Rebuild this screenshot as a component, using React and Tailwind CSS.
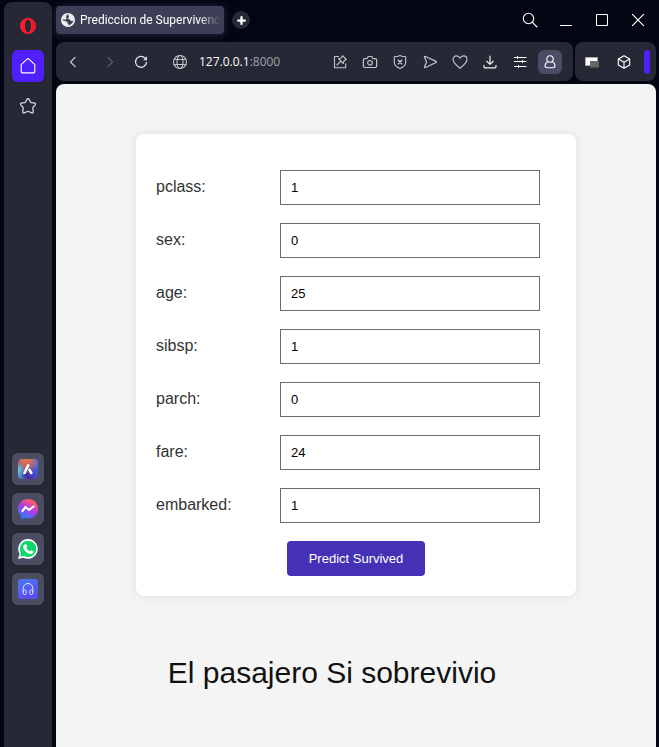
import React from "react";

const FIELDS = [
  { name: "pclass", value: "1" },
  { name: "sex", value: "0" },
  { name: "age", value: "25" },
  { name: "sibsp", value: "1" },
  { name: "parch", value: "0" },
  { name: "fare", value: "24" },
  { name: "embarked", value: "1" },
];

function Icon({ children, className = "size-4", width = 1.1 }) {
  return (
    <svg
      viewBox="0 0 16 16"
      className={className}
      fill="none"
      stroke="currentColor"
      strokeWidth={width}
      strokeLinecap="round"
      strokeLinejoin="round"
      aria-hidden="true"
    >
      {children}
    </svg>
  );
}

function IconButton({ label, className = "w-[30px] h-6", children }) {
  return (
    <button type="button" aria-label={label} className={`flex shrink-0 items-center justify-center ${className}`}>
      {children}
    </button>
  );
}

function Sidebar() {
  return (
    <nav className="ml-1 mt-0.5 flex w-12 shrink-0 flex-col items-center rounded-t-lg bg-[#262935] pt-2 text-[#d4d5dc]">
      <IconButton label="Opera" className="size-8">
        <svg viewBox="0 0 16 16" className="size-4" aria-hidden="true">
          <path
            fill="#ff1b2d"
            fillRule="evenodd"
            d="M8 0a8 8 0 1 0 0 16A8 8 0 0 0 8 0ZM8 1.800c1.900 0 3 2.800 3 6.200s-1.100 6.200-3 6.200S5 11.400 5 8s1.100-6.200 3-6.200Z"
          />
          <path fill="#e0192a" d="M10.500 1c3.200 1 5.500 3.800 5.500 7s-2.300 6-5.500 7c1.300-1.400 2-4 2-7s-.7-5.600-2-7Z" />
        </svg>
      </IconButton>
      <IconButton label="Home" className="mt-2 size-8 rounded-md bg-[#4f1fff] text-white">
        <Icon>
          <path d="M1.200 6.700 6.800 1.300a1.700 1.700 0 0 1 2.400 0l5.600 5.400v6.200a2 2 0 0 1-2 2H3.200a2 2 0 0 1-2-2Z" />
        </Icon>
      </IconButton>
      <IconButton label="Bookmarks" className="mt-2 size-8">
        <Icon width={1.3}>
          <path d="M7.100 1.100c.4-.7 1.400-.7 1.800 0l1.700 3.100c.1.200.4.400.7.400l3.400.6c.8.200 1.100 1.100.6 1.700l-2.200 2.400c-.2.300-.3.600-.3.900l.5 3.600c.1.800-.7 1.400-1.400 1.100l-3.400-1.400a1.300 1.300 0 0 0-1 0l-3.400 1.400c-.7.300-1.500-.3-1.400-1.100l.5-3.600c0-.3-.1-.6-.3-.9L.7 6.900c-.5-.6-.2-1.500.6-1.700l3.400-.6c.3 0 .6-.2.700-.4Z" />
        </Icon>
      </IconButton>

      <div className="mt-[331px] flex flex-col gap-2">
        <IconButton label="Aria" className="size-8 rounded-md bg-[#4b4d63]">
          <svg viewBox="0 0 20 20" className="size-5" aria-hidden="true">
            <defs>
              <linearGradient id="aria" x1="0" y1="1" x2="1" y2="0.3">
                <stop offset="0" stopColor="#3fb0e6" />
                <stop offset="0.35" stopColor="#4a2b9c" />
                <stop offset="1" stopColor="#3f69ee" />
              </linearGradient>
              <radialGradient id="ariaWarm" cx="0.4" cy="0.05" r="0.7">
                <stop offset="0" stopColor="#e8744a" />
                <stop offset="0.4" stopColor="#e8744a" stopOpacity="0.8" />
                <stop offset="1" stopColor="#e8744a" stopOpacity="0" />
              </radialGradient>
              <radialGradient id="ariaCool" cx="0" cy="0.55" r="0.4">
                <stop offset="0" stopColor="#69d8ea" />
                <stop offset="1" stopColor="#69d8ea" stopOpacity="0" />
              </radialGradient>
            </defs>
            <rect width="20" height="20" rx="4" fill="url(#aria)" />
            <rect width="20" height="20" rx="4" fill="url(#ariaWarm)" />
            <rect width="20" height="20" rx="4" fill="url(#ariaCool)" />
            <path d="M6.500 14 10.200 6.300M11.500 10.800 13.300 14" fill="none" stroke="#fff" strokeWidth="2.600" strokeLinecap="round" />
          </svg>
        </IconButton>
        <IconButton label="Messenger" className="size-8 rounded-md bg-[#4b4d63]">
          <svg viewBox="0 0 20 20" className="size-5" aria-hidden="true">
            <defs>
              <linearGradient id="messenger" x1="0.2" y1="1" x2="0.75" y2="0">
                <stop offset="0" stopColor="#1689ff" />
                <stop offset="0.5" stopColor="#a83de8" />
                <stop offset="0.9" stopColor="#ff5a70" />
              </linearGradient>
            </defs>
            <path fill="url(#messenger)" d="M10 0C4.300 0 0 4.200 0 9.700c0 2.900 1.200 5.300 3.200 7.100v2.600c0 .5.500.8.9.6l2.300-1c1.100.3 2.300.5 3.600.5 5.700 0 10-4.200 10-9.800S15.700 0 10 0Z" />
            <path d="m4.500 12 3-4 3.500 3 4.500-3.500" fill="none" stroke="#fff" strokeWidth="2.200" strokeLinejoin="round" strokeLinecap="round" />
          </svg>
        </IconButton>
        <IconButton label="WhatsApp" className="size-8 rounded-md bg-[#4b4d63]">
          <svg viewBox="0 0 20 20" className="size-5" aria-hidden="true">
            <path fill="#fff" d="M10.100 0a9.900 9.900 0 0 0-8.500 14.900L0 20l5.300-1.300A9.900 9.900 0 1 0 10.100 0Z" />
            <circle cx="10.100" cy="9.900" r="8.200" fill="#0bd86b" />
            <path fill="#0bd86b" d="m3 12.500-.8 5.300 5-1.300Z" />
            <path fill="#fff" d="M6.900 5.200h.9c.3 0 .4.200.6.500l.8 1.900c.1.300 0 .5-.9 1.500.9 1.700 2 2.600 3.600 3.300.8-1 1-1.200 1.300-1l2 .9c.3.200.3.400.2 1-.2 1.100-1.500 1.900-2.600 1.800-4-.5-7.400-3.700-7.700-7 0-1.300.9-2.600 1.800-2.900Z" />
          </svg>
        </IconButton>
        <IconButton label="Player" className="size-8 rounded-md bg-[#4b4d63]">
          <svg viewBox="0 0 20 20" className="size-5" aria-hidden="true">
            <defs>
              <linearGradient id="player" x1="0" y1="0" x2="0.4" y2="1">
                <stop offset="0" stopColor="#477bf0" />
                <stop offset="1" stopColor="#5a4cf0" />
              </linearGradient>
            </defs>
            <rect width="20" height="20" rx="3" fill="url(#player)" />
            <path
              d="M5.200 13V9.300a4.800 4.800 0 0 1 9.600 0V13M5.200 12.500c0-2 3-2.200 3-.2v1.900c0 2-3 1.800-3-.2Zm9.600 0c0-2-3-2.200-3-.2v1.900c0 2 3 1.800 3-.2Z"
              fill="none"
              stroke="#e4e6ff"
              strokeWidth="1"
            />
          </svg>
        </IconButton>
      </div>
    </nav>
  );
}

function TitleBar() {
  return (
    <header className="flex h-10 items-center text-white">
      <div className="flex h-7 w-[168px] items-center gap-[5px] rounded bg-[#3c3f56] pl-[5px] pr-1 shadow-[0_1px_8px_rgba(60,63,86,0.6)]">
        <svg viewBox="0 0 14 14" className="size-3.5 shrink-0" aria-hidden="true">
          <circle cx="7" cy="7" r="7" fill="#eceef3" />
          <path
            fill="#3c3f56"
            d="M8.500 1.500C7.300 1.900 7 2.400 7.200 3.100c1 .1 1.200.8.700 1.400-.9.400-1.700.5-1.500 1.300 1.600 0 2.900.6 3 1.900l2.800.3c-.3 1.500-1.200 2.700-2.700 3.500l-2 .9V10.700c-.8-.4-1.300-1-1.300-2L1.700 7.300c-.1-.4-.1-.7 0-1.100l2.800.5c.9-.1.400-1.700 1-2.400-.6-.6-.4-1.700.5-2.600.8-.3 1.700-.4 2.500-.2Z"
          />
        </svg>
        <span className="whitespace-nowrap font-[Roboto,sans-serif] text-xs [mask-image:linear-gradient(to_right,black_85%,transparent)]">
          Prediccion de Supervivenc
        </span>
      </div>
      <IconButton label="New tab" className="ml-2 size-[18px] rounded-full bg-[#262935]">
        <Icon width={4} className="size-[9px]">
          <path d="M8 2v12M2 8h12" />
        </Icon>
      </IconButton>
      <div className="ml-auto flex">
        <IconButton label="Search tabs" className="h-8 w-9">
          <Icon>
            <circle cx="6.500" cy="6.500" r="5.200" />
            <path d="m10.400 10.400 4.600 4.600" />
          </Icon>
        </IconButton>
        <IconButton label="Minimize" className="h-8 w-9">
          <svg viewBox="0 0 12 12" className="size-3" aria-hidden="true"><path d="M0 11h12v1H0z" fill="currentColor" /></svg>
        </IconButton>
        <IconButton label="Maximize" className="h-8 w-9">
          <svg viewBox="0 0 12 12" className="size-3" aria-hidden="true"><path d="M.5.5h11v11H.5z" fill="none" stroke="currentColor" /></svg>
        </IconButton>
        <IconButton label="Close" className="h-8 w-9">
          <svg viewBox="0 0 12 12" className="size-3" aria-hidden="true"><path d="m0 0 12 12M12 0 0 12" fill="none" stroke="currentColor" strokeWidth="1.200" /></svg>
        </IconButton>
      </div>
    </header>
  );
}

function Toolbar() {
  return (
    <div className="mt-0.5 flex h-[39px] gap-0.5 text-[#c3c4ca]">
      <div className="flex min-w-0 flex-1 items-center rounded-lg bg-[#262935] pl-1.5 pr-2">
        <IconButton label="Back" className="h-6 w-[22px]">
          <Icon width={1.2}><path d="M10 3.500 5.500 8l4.500 4.500" /></Icon>
        </IconButton>
        <IconButton label="Forward" className="ml-[15px] h-6 w-[22px] text-[#5c5e69]">
          <Icon width={1.2}><path d="M6 3.500 10.500 8 6 12.500" /></Icon>
        </IconButton>
        <IconButton label="Reload" className="ml-2 h-6 w-6 text-[#e2e3e8]">
          <Icon width={1.300}>
            <path d="M12.200 4.200A5.500 5.500 0 1 0 13.500 8.400" />
            <path d="M14 2.300v4H10Z" fill="currentColor" stroke="none" />
          </Icon>
        </IconButton>
        <IconButton label="Site information" className="ml-[15px] h-6 w-6">
          <Icon>
            <circle cx="8" cy="8" r="6.500" />
            <ellipse cx="8" cy="8" rx="3" ry="6.500" />
            <path d="M2.300 5.500h11.400M2.300 10.500h11.400" />
          </Icon>
        </IconButton>
        <span className="ml-[7px] whitespace-nowrap font-['Open_Sans',sans-serif] text-xs text-[#a1a3ad]">
          <span className="text-white">127.0.0.1</span>:8000
        </span>
        <div className="ml-auto flex">
          <IconButton label="Edit page">
            <Icon>
              <path d="M6.500 2.500h-4v11.200h11.200v-4" />
              <path d="m10.500 1.700 3.800 3.800-1 .4-1.600 1.600-.3 2-4.900-4.900 2-.3L10.100 2.700ZM8.500 7.500 5 11" />
            </Icon>
          </IconButton>
          <IconButton label="Snapshot">
            <Icon width={1.200}>
              <path d="M2.600 4.700h2.300l1.300-2.200h3.600l1.300 2.200h2.300c.7 0 1.200.5 1.200 1.200v6.400c0 .7-.5 1.200-1.200 1.200H2.600c-.7 0-1.200-.5-1.200-1.200V5.900c0-.7.5-1.200 1.200-1.200Z" />
              <circle cx="8" cy="8.800" r="2.300" />
            </Icon>
          </IconButton>
          <IconButton label="Ad blocker">
            <Icon>
              <path d="M8 1.500c1.500.9 3.500 1.300 5.700 1.300v5.400c0 3-2.500 4.900-5.700 6.300-3.200-1.400-5.700-3.300-5.700-6.300V2.800C4.500 2.800 6.500 2.400 8 1.500Z" />
              <path d="m6.400 6.400 3.200 3.200m0-3.200L6.400 9.600" strokeWidth="1.500" />
            </Icon>
          </IconButton>
          <IconButton label="Send">
            <Icon width={1.200}><path d="M3 2.300 14 7.400c.5.200.5.900 0 1.100L3 13.700c-.4.200-.8-.2-.6-.6L4.600 8 2.400 2.900c-.2-.4.200-.8.6-.6Z" /></Icon>
          </IconButton>
          <IconButton label="Add to favorites">
            <Icon><path d="M8 14.200C4 11 1 8.600 1 5.400 1 3.200 2.600 1.900 4.400 1.900c1.600 0 2.900.9 3.600 2.400.7-1.500 2-2.400 3.600-2.400C13.400 1.900 15 3.200 15 5.400c0 3.200-3 5.600-7 8.800Z" /></Icon>
          </IconButton>
          <IconButton label="Downloads">
            <Icon className="size-4 text-[#f1f1f4]" width={1.2}>
              <path d="M8 2v8.300M4.800 7.300 8 10.400l3.200-3.100M2 11.300v1.500c0 .6.400 1 1 1h10c.6 0 1-.4 1-1v-1.500" />
            </Icon>
          </IconButton>
          <IconButton label="Easy setup">
            <Icon className="size-4 text-white" width={1}>
              <path d="M2.500 3.500h11.500M2.500 7.500h11.500M2.500 12.500h11.500M5.500 2.500v2M10.500 6.500v2M6.500 11.500v2" />
            </Icon>
          </IconButton>
          <div className="px-[3px]">
            <IconButton label="Profile" className="size-6 rounded-md bg-[#4a4d66] text-white">
              <Icon>
                <circle cx="8" cy="5" r="3.200" />
                <path d="M5.500 7.700C4 8.600 3 9.900 3 11.600c0 1.300.9 2.100 2.300 2.100h5.400c1.400 0 2.300-.8 2.300-2.100 0-1.700-1-3-2.500-3.900" />
              </Icon>
            </IconButton>
          </div>
        </div>
      </div>
      <div className="flex w-[81px] shrink-0 items-center gap-2 rounded-lg bg-[#262935] pl-[5px] pr-1.5">
        <IconButton label="Video popout" className="size-6">
          <svg viewBox="0 0 16 16" className="size-4" aria-hidden="true">
            <path d="M1.500 3.500h12v8h-12z" fill="#fff" stroke="#a9a9a9" />
            <path d="M6 7h9v6.500H6z" fill="#666" />
          </svg>
        </IconButton>
        <IconButton label="Extensions" className="size-6 text-white">
          <Icon>
            <path d="M8 1.800 13.700 5v6L8 14.200 2.300 11V5ZM2.300 5 8 8.200 13.700 5M8 8.200v6" />
          </Icon>
        </IconButton>
        <div className="ml-auto h-6 w-1.5 shrink-0 rounded-full bg-[#4f1fff]" />
      </div>
    </div>
  );
}

function PassengerForm() {
  return (
    <form
      onSubmit={(event) => event.preventDefault()}
      className="mx-auto flex w-full max-w-[440px] flex-col gap-[18px] rounded-lg bg-white px-5 pb-5 pt-9 shadow-[0_0_10px_rgba(0,0,0,0.1)]"
    >
      {FIELDS.map((field) => (
        <div key={field.name} className="flex items-start pr-4">
          <label htmlFor={field.name} className="w-[124px] shrink-0 text-base leading-[33px] text-[#333]">
            {field.name}:
          </label>
          <input
            id={field.name}
            name={field.name}
            type="text"
            defaultValue={field.value}
            className="h-[35px] w-full min-w-0 border border-[#6c6c6c] bg-white px-2.5 text-[13px] text-black"
          />
        </div>
      ))}
      <button type="submit" className="h-[35px] w-[138px] self-center rounded bg-[#4531b5] text-[13px] text-white">
        Predict Survived
      </button>
    </form>
  );
}

export default function App() {
  return (
    <div className="flex min-h-screen bg-[#020613] font-['Liberation_Sans',Arial,sans-serif]">
      <Sidebar />
      <div className="ml-1 mr-[3px] flex min-w-0 flex-1 flex-col">
        <TitleBar />
        <Toolbar />
        <main className="mt-[3px] flex-1 rounded-t-lg bg-[#f4f4f4] px-5 pt-[50px]">
          <PassengerForm />
          <p className="mt-[55px] pr-12 text-center text-[30px] leading-[44px] text-[#111]">
            El pasajero Si sobrevivio
          </p>
        </main>
      </div>
    </div>
  );
}
